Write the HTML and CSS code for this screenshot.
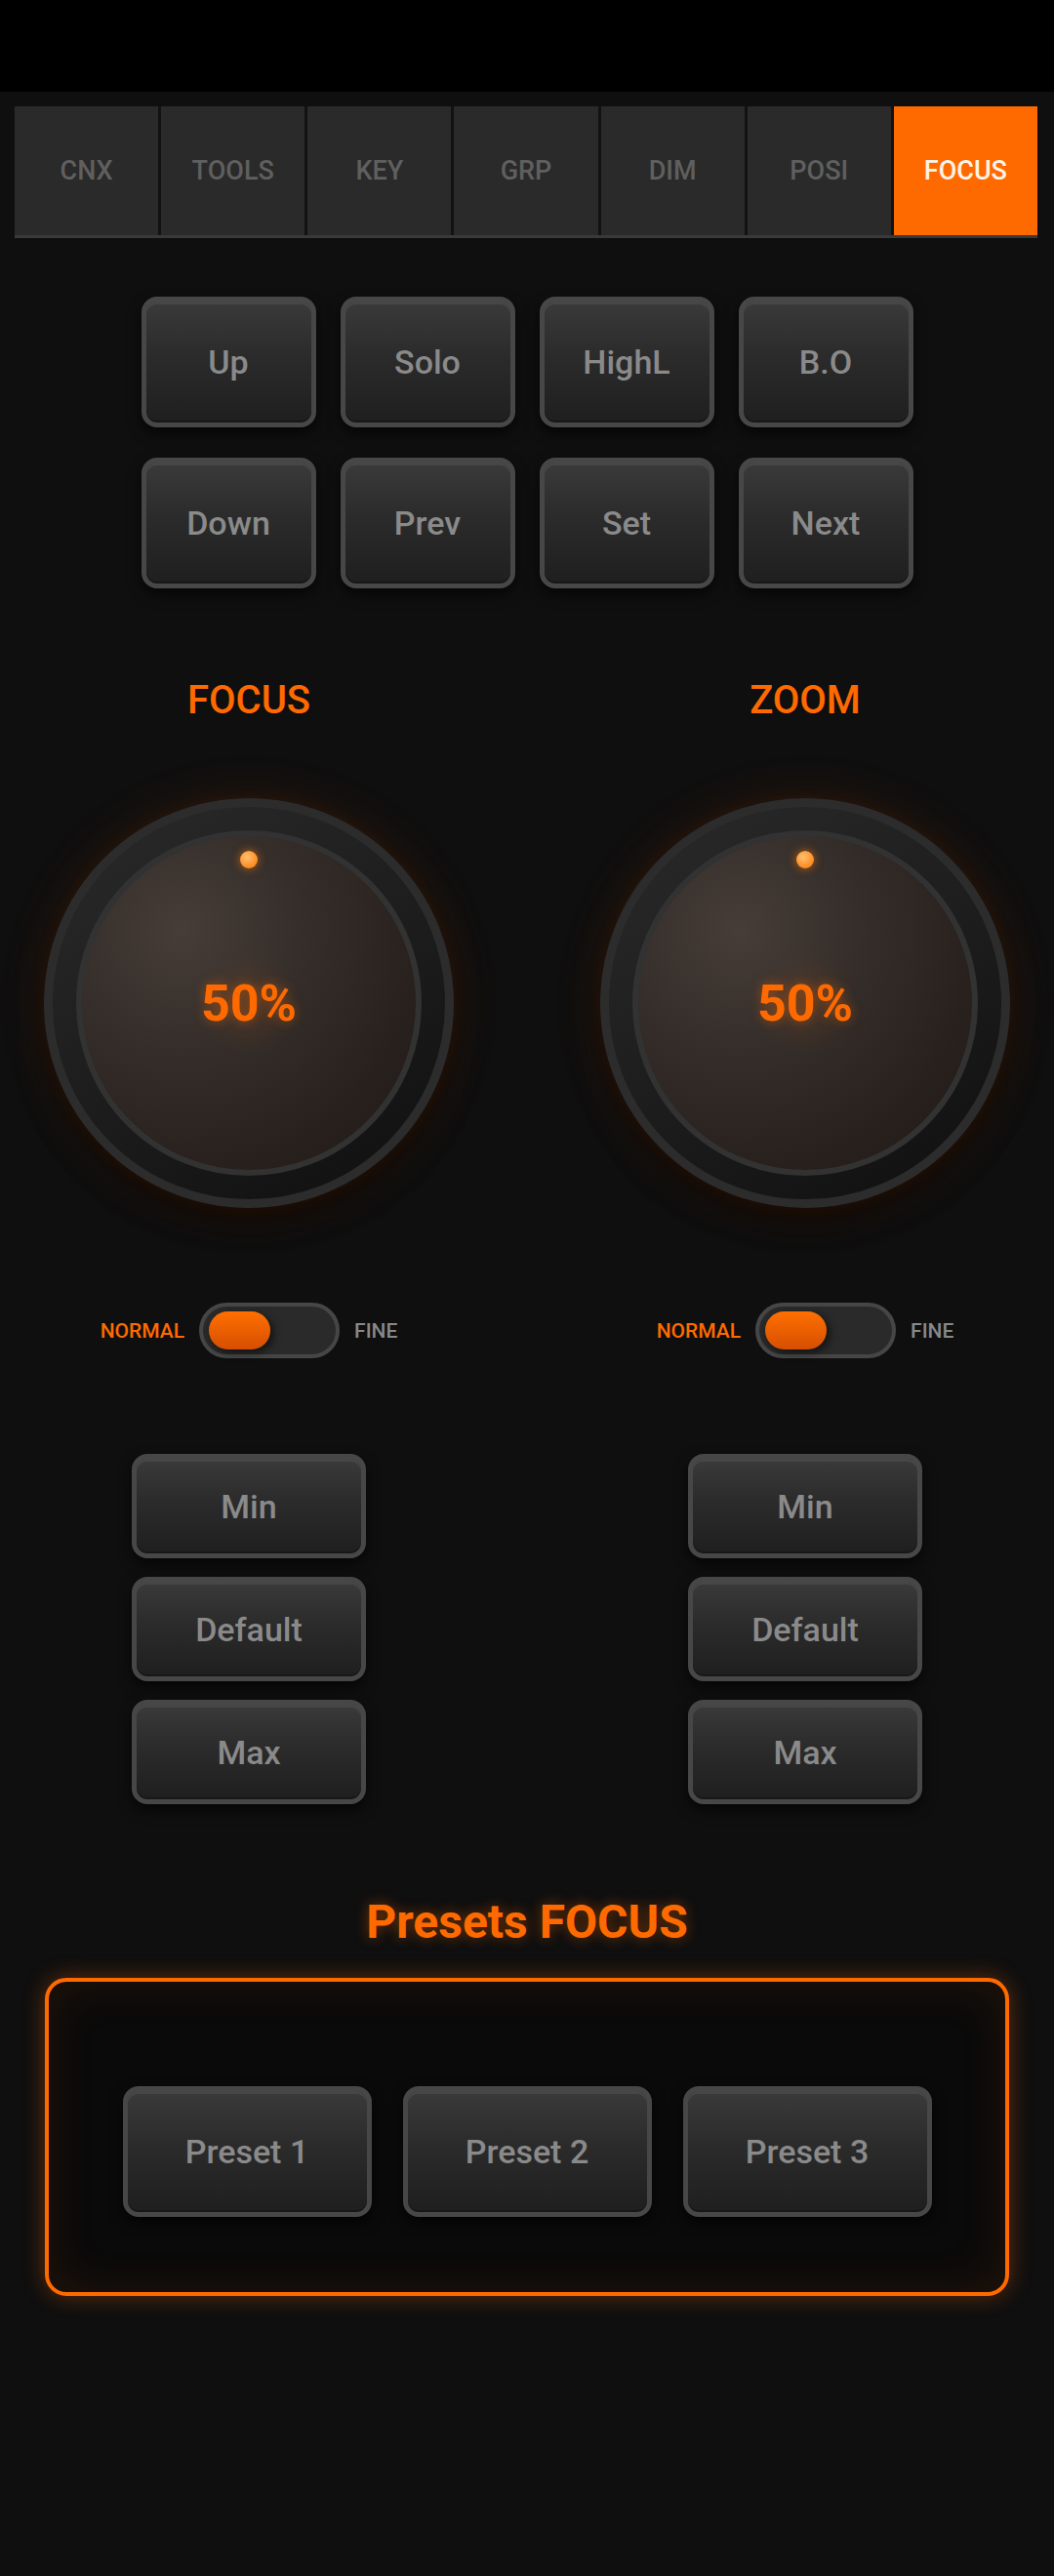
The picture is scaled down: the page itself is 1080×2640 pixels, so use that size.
FILE: index.html
```html
<!DOCTYPE html>
<html lang="en">
<head>
<meta charset="utf-8">
<title>Focus</title>
<link rel="stylesheet" href="styles.css">
</head>
<body>
<div class="statusbar"></div>
<nav class="tabs">
  <div class="tab">CNX</div>
  <div class="tab">TOOLS</div>
  <div class="tab">KEY</div>
  <div class="tab">GRP</div>
  <div class="tab">DIM</div>
  <div class="tab">POSI</div>
  <div class="tab active">FOCUS</div>
</nav>

<section class="pad-grid">
  <button class="btn btn-sq">Up</button>
  <button class="btn btn-sq">Solo</button>
  <button class="btn btn-sq">HighL</button>
  <button class="btn btn-sq">B.O</button>
  <button class="btn btn-sq">Down</button>
  <button class="btn btn-sq">Prev</button>
  <button class="btn btn-sq">Set</button>
  <button class="btn btn-sq">Next</button>
</section>

<section class="knobs">
  <div class="knob-col">
    <div class="knob-label">FOCUS</div>
    <div class="knob">
      <div class="face">
        <span class="dot"></span>
        <span class="value">50%</span>
      </div>
    </div>
    <div class="mode">
      <span class="mode-on">NORMAL</span>
      <span class="track"><span class="thumb"></span></span>
      <span class="mode-off">FINE</span>
    </div>
    <div class="limits">
      <button class="btn btn-wide">Min</button>
      <button class="btn btn-wide">Default</button>
      <button class="btn btn-wide">Max</button>
    </div>
  </div>
  <div class="knob-col">
    <div class="knob-label">ZOOM</div>
    <div class="knob">
      <div class="face">
        <span class="dot"></span>
        <span class="value">50%</span>
      </div>
    </div>
    <div class="mode">
      <span class="mode-on">NORMAL</span>
      <span class="track"><span class="thumb"></span></span>
      <span class="mode-off">FINE</span>
    </div>
    <div class="limits">
      <button class="btn btn-wide">Min</button>
      <button class="btn btn-wide">Default</button>
      <button class="btn btn-wide">Max</button>
    </div>
  </div>
</section>

<h2 class="presets-title">Presets FOCUS</h2>
<section class="presets">
  <button class="btn btn-preset">Preset 1</button>
  <button class="btn btn-preset">Preset 2</button>
  <button class="btn btn-preset">Preset 3</button>
</section>
</body>
</html>
```
FILE: styles.css
```css
* { box-sizing: border-box; }

html, body {
  margin: 0;
  padding: 0;
  background: #0f0f0f;
  font-family: Roboto, "Noto Sans", sans-serif;
  width: 1080px;
  min-height: 2640px;
}

.statusbar {
  height: 94px;
  background: #000;
}

.tabs {
  display: flex;
  gap: 3px;
  margin: 15px 17px 0 15px;
  background: #121212;
  border-bottom: 3px solid #393939;
}

.tab {
  flex: 1 1 0;
  height: 132px;
  background: #2a2a2a;
  color: #5f5f5f;
  font-size: 27px;
  font-weight: 500;
  display: flex;
  align-items: center;
  justify-content: center;
}

.tab.active {
  background: #ff6a00;
  color: #fff4ea;
}

.btn {
  font-family: Roboto, "Noto Sans", sans-serif;
  font-weight: 500;
  font-size: 34px;
  color: #8a8a8a;
  background: linear-gradient(180deg, #3a3a3a 0%, #2b2b2b 45%, #1f1f1f 100%);
  border: 5px solid #474747;
  border-radius: 16px;
  box-shadow: inset 0 3px 0 rgba(255,255,255,0.07), inset 0 -2px 0 rgba(0,0,0,0.25), 0 6px 14px rgba(0,0,0,0.65);
  padding: 0;
  display: flex;
  align-items: center;
  justify-content: center;
}

.pad-grid {
  display: grid;
  grid-template-columns: repeat(4, 179px);
  grid-auto-rows: 134px;
  column-gap: 25px;
  row-gap: 31px;
  justify-content: center;
  margin-top: 60px;
}

.btn-sq { width: 179px; height: 134px; }

.knobs {
  display: flex;
  justify-content: space-between;
  padding: 0 45px;
  margin-top: 95px;
}

.knob-col {
  width: 420px;
  display: flex;
  flex-direction: column;
  align-items: center;
}

.knob-label {
  color: #ff6a00;
  font-size: 40px;
  line-height: 40px;
  font-weight: 500;
  margin-bottom: 80px;
}

.knob {
  width: 420px;
  height: 420px;
  border-radius: 50%;
  border: 9px solid #2c2c2c;
  background: linear-gradient(150deg, #2a2a2a 0%, #1c1c1c 55%, #0f0f0f 100%);
  box-shadow: 0 0 50px rgba(255,106,0,0.13), 0 0 18px rgba(255,106,0,0.06), 0 12px 30px rgba(0,0,0,0.7);
  display: flex;
  align-items: center;
  justify-content: center;
}

.face {
  position: relative;
  width: 354px;
  height: 354px;
  border-radius: 50%;
  border: 6px solid #323232;
  background:
    radial-gradient(circle at 50% 50%, rgba(255,106,0,0.10) 0%, rgba(255,106,0,0) 22%),
    radial-gradient(circle at 30% 28%, #463d38 0%, #352e2a 35%, #28211d 70%, #1f1915 100%);
  display: flex;
  align-items: center;
  justify-content: center;
}

.dot {
  position: absolute;
  top: 15px;
  left: 50%;
  width: 18px;
  height: 18px;
  margin-left: -9px;
  border-radius: 50%;
  background: radial-gradient(circle at 40% 35%, #ffc070 0%, #ff9530 55%, #ff7a10 100%);
  box-shadow: 0 0 10px rgba(255,120,0,0.7);
}

.value {
  color: #ff6a00;
  font-size: 52px;
  font-weight: 700;
  text-shadow: 0 0 12px rgba(255,106,0,0.45);
}

.mode {
  display: flex;
  align-items: center;
  gap: 15px;
  margin-top: 97px;
}

.mode-on, .mode-off {
  font-size: 21px;
  font-weight: 500;
}

.mode-on { color: #ff6a00; }
.mode-off { color: #888; }

.track {
  width: 144px;
  height: 57px;
  border-radius: 29px;
  border: 4px solid #464646;
  background: #2a2a2a;
  padding: 5px 6px;
  display: flex;
  align-items: center;
}

.thumb {
  width: 63px;
  height: 39px;
  border-radius: 20px;
  background: linear-gradient(180deg, #ff7000 0%, #d64e00 100%);
  box-shadow: 3px 3px 8px rgba(0,0,0,0.6);
}

.limits {
  display: flex;
  flex-direction: column;
  gap: 19px;
  margin-top: 98px;
}

.btn-wide { width: 240px; height: 107px; }

.presets-title {
  margin: 97px 0 0;
  text-align: center;
  color: #ff6a00;
  font-size: 48px;
  line-height: 48px;
  font-weight: 700;
  text-shadow: 0 0 14px rgba(255,106,0,0.45);
}

.presets {
  margin: 33px 46px 0;
  height: 326px;
  border: 4px solid #ff6a00;
  border-radius: 22px;
  background: #0a0a0a;
  box-shadow: 0 0 22px rgba(255,106,0,0.35), inset 0 0 50px rgba(255,106,0,0.10);
  display: flex;
  justify-content: center;
  align-items: flex-start;
  gap: 32px;
  padding-top: 107px;
}

.btn-preset { width: 255px; height: 134px; }
```
